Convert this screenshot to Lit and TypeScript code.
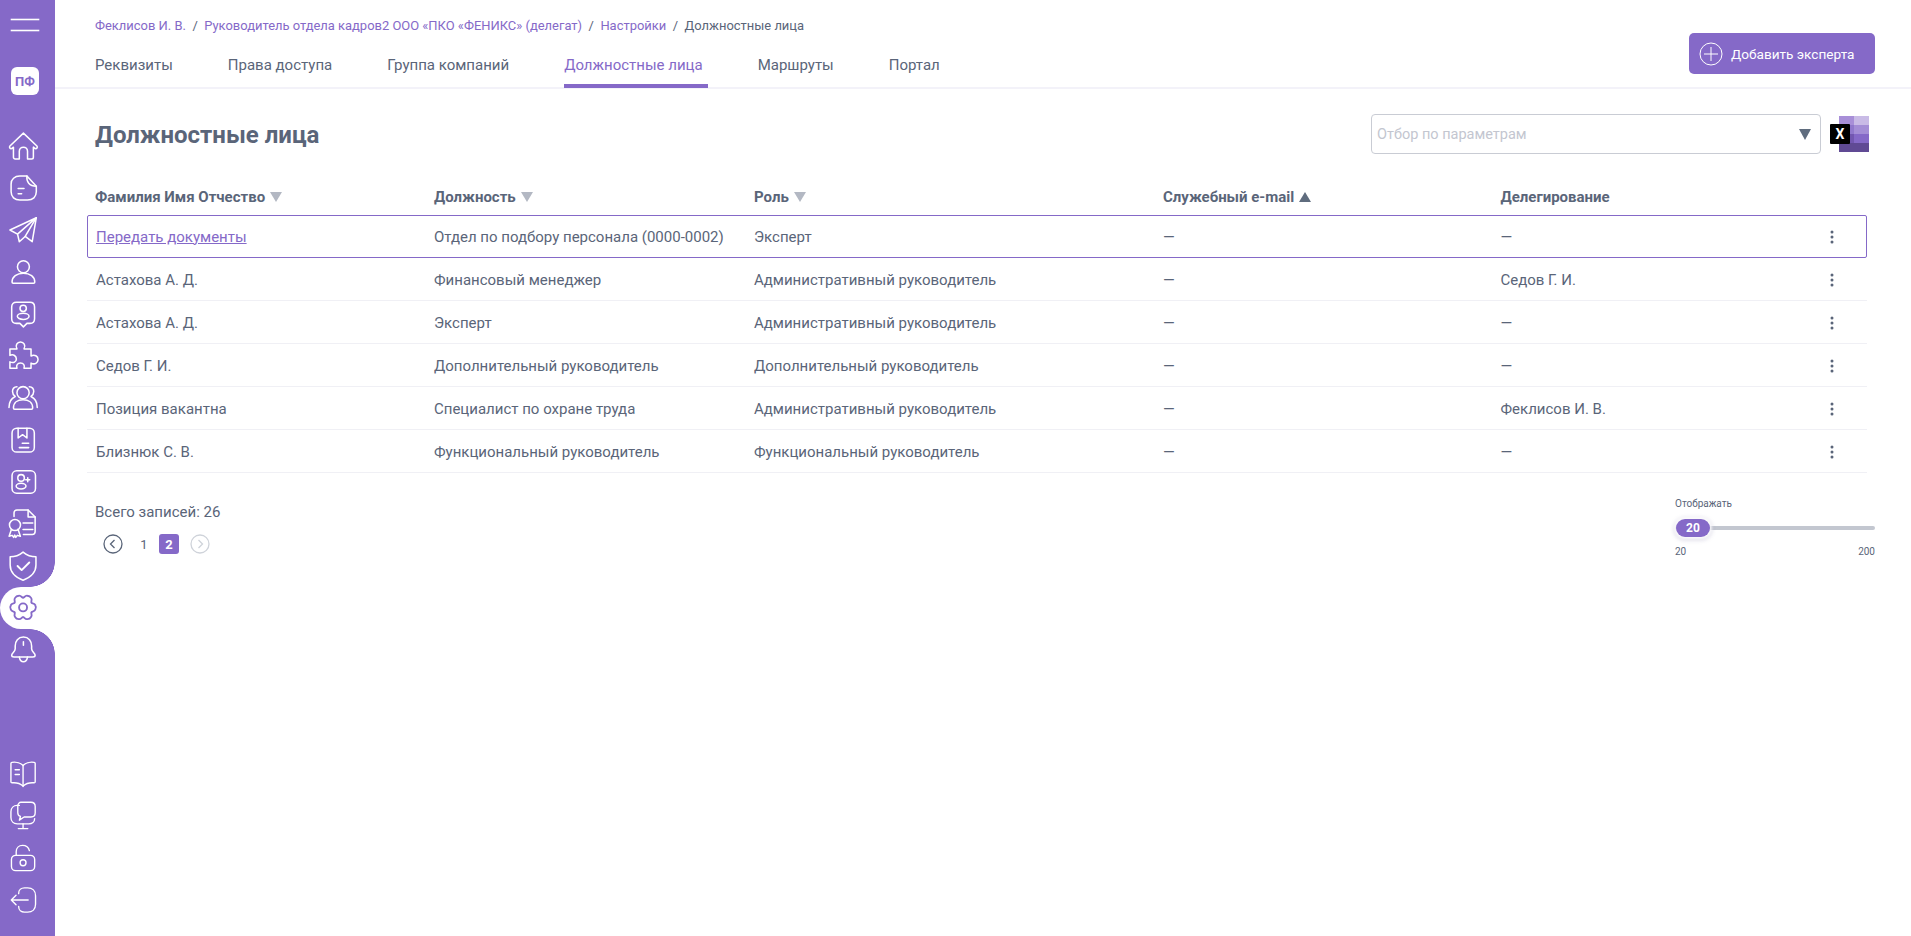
import { LitElement, html, css, svg } from 'lit';
import { customElement } from 'lit/decorators.js';
import { classMap } from 'lit/directives/class-map.js';

// six rounded lobes around the centre of the 29 box
function gearPath() {
  const pt = (deg: number, r: number) => {
    const a = (deg * Math.PI) / 180;
    return `${(13.7 + r * Math.cos(a)).toFixed(2)} ${(14 + r * Math.sin(a)).toFixed(2)}`;
  };
  const outer = 10.6;
  const inner = 8.2;
  let d = `M${pt(-30, inner)}`;
  for (let i = 0; i < 6; i++) {
    const a = i * 60;
    d += `C${pt(a - 24, inner)} ${pt(a - 20, outer)} ${pt(a - 10, outer)}`;
    d += `C${pt(a - 3, outer + 0.6)} ${pt(a + 3, outer + 0.6)} ${pt(a + 10, outer)}`;
    d += `C${pt(a + 20, outer)} ${pt(a + 24, inner)} ${pt(a + 30, inner)}`;
  }
  return d + 'Z';
}

const icons = {
  home: svg`<path d="M2.500 14.500 14 3.500l11.500 11c1 1.200-.3 2.600-1.500 2.200L22.500 15.500V24c0 1-.6 1.500-1.500 1.500h-3.500V19c0-2-1.500-3.500-3.500-3.500s-3.500 1.500-3.500 3.500v6.500H7c-.9 0-1.500-.5-1.500-1.500v-8.500L4 16.700c-1.200.4-2.500-1-1.500-2.200Z"/>`,
  doc: svg`<path d="M17 4.300H11C6.500 4.300 3.500 7 3.500 11v6.800C3.500 22 6.500 24.800 11 24.800h6.500c4.500 0 7.500-2.800 7.500-7V13Z"/><path d="M17 4.300c-.6 4.700 2 8.700 8 8.700"/><path d="M9.500 15h5M9.500 19.500h3"/>`,
  send: svg`<path d="M25 4 2.500 14.500l6.500 3.500L25 4l-3.500 20.500-6-4.500-5 4.500-1.500-6.500"/><path d="M15.500 20 25 4"/>`,
  user: svg`<circle cx="14" cy="10" r="5.100"/><path d="M4.300 23c0-4.500 4-7.500 9.700-7.500s9.700 3 9.700 7.500c0 .7-.4 1-1 1H5.300c-.6 0-1-.3-1-1Z"/>`,
  badge: svg`<path d="M8 4.500h11.500c2.500 0 4 1.500 4 4v10c0 2.500-1.500 4-4 4h-2.500l-3 3-3-3H8c-2.500 0-4-1.500-4-4v-10c0-2.500 1.500-4 4-4Z"/><circle cx="13.800" cy="9.700" r="2.700"/><ellipse cx="13.800" cy="16.500" rx="5" ry="2.600"/>`,
  puzzle: svg`<path d="M2.500 8.500h6c-1.800-3 .2-6 3-6s4.800 3 3 6h6v6c3-1.800 6 .2 6 3s-3 4.800-6 3v4.500h-6c1-3-.7-4.500-3-4.500s-4 1.500-3 4.500h-6v-5.500c3 1.500 5.500-.2 5.500-2.500S5.500 12.500 2.500 14Z"/>`,
  group: svg`<circle cx="13.700" cy="10" r="5.200"/><path d="M5.500 23c0-4.500 3.500-7 8.200-7s8.200 2.500 8.200 7c0 .6-.3 1-1 1H6.500c-.7 0-1-.4-1-1Z"/><path d="M8.500 5C6 5.200 4.700 7 4.700 9c0 1.800.9 3.200 2.300 4.200-3.200 1.500-5.300 5-5.300 9.300M19 5c2.500.2 3.800 2 3.800 4 0 1.800-.9 3.200-2.300 4.200 3.200 1.500 5.300 5 5.300 9.300"/>`,
  book: svg`<rect x="4.300" y="4.500" width="19" height="20.300" rx="4"/><path d="M9.500 4.500v8.300l3.800-2.800 3.700 2.800V4.500"/><path d="M13 17.300h5.500M10.500 21h8"/>`,
  userPlus: svg`<rect x="4.300" y="5" width="20" height="19" rx="4"/><circle cx="12" cy="11" r="2.800"/><ellipse cx="12" cy="18" rx="4.200" ry="2.400"/><path d="M16 12.500h3.400M17.700 10.800v3.400"/>`,
  cert: svg`<path d="M6 8V5c0-1.500 1-2.500 2.500-2.500H18l6 6V21c0 1.500-1 2.500-2.500 2.500H14"/><path d="M18 2.500V8.500h6"/><path d="M13.700 13.700h8.300M13.700 19.200h8.300"/><circle cx="6.800" cy="15.400" r="4.700"/><path d="m3.800 19-2 6 2.600-.8 1.300 1.700.9-1.900.9 1.900 1.300-1.700 2.600.8-2-6"/>`,
  shield: svg`<path transform="translate(-.8 0)" d="M14.500 2.600c3 2.500 7 4 11 4v7c0 6-4.500 10.500-11 13-6.500-2.500-11-7-11-13v-7c4 0 8-1.500 11-4Z"/><path d="m9 14.500 3.500 3.500 6.500-6.500" stroke-width="1.600"/>`,
  gear: svg`<circle cx="13.700" cy="14" r="3.400"/><path d=${gearPath()}/>`,
  bell: svg`<path d="M14 3.500c-4.500 0-7 3.500-7 7.500v2.500c0 2.500-3 3.500-3 5.500 0 1.200.8 1.500 2 1.500h16c1.200 0 2-.3 2-1.500 0-2-3-3-3-5.500V11c0-4-2.500-7.500-7-7.500Z"/><path d="M14 7.500v3"/><path d="M10.500 20.500c.5 2.800 2 4 3.500 4s3-1.200 3.500-4"/>`,
  manual: svg`<g transform="translate(13.700 14) scale(.9) translate(-14 -14)"><path d="M14 6.500C11.500 4 7.500 3 3.500 3.500c-.7.100-1 .5-1 1.100v17.300c0 .7.500 1.100 1.200 1 4-.4 7.500.6 10.300 3 2.800-2.400 6.300-3.400 10.300-3 .7.100 1.200-.3 1.200-1V4.600c0-.6-.3-1-1-1.100-4-.5-8 .5-10.500 3Z"/><path d="M14 6.500v19.900"/><path d="M6.500 10.500h4M6.500 15h4"/></g>`,
  chat: svg`<g transform="translate(13.700 14) scale(.9) translate(-14.500 -15)"><path d="M11 5.500H9C5.500 5.500 3 8 3 11.500v5.500c0 3.500 2.500 6 6 6h11c3 0 5.500-2 5.500-5"/><path d="M13 2.500h9c2.500 0 4 1.500 4 4v6c0 2.500-1.500 4-4 4h-6.500l-4.500 3 1-3.500c-1.500-.5-2.500-2-2.500-3.500V6.500c0-2.500 1.500-4 3-4Z"/><path d="M14.500 23v4M10 27.500h9"/></g>`,
  lock: svg`<g transform="translate(13.700 14.500) scale(.9) translate(-14.500 -14.500)"><rect x="3.500" y="12" width="22" height="14.500" rx="4"/><circle cx="14.500" cy="19" r="2.800"/><path d="M8 12V8.500C8 5 10.500 2.500 14 2.500c3.200 0 5.800 2 6.500 5"/></g>`,
  exit: svg`<g transform="translate(14 14.500) scale(.9) translate(-13.500 -14)"><path d="M9 8V7.500C9 4.500 11.500 2.500 14.500 2.500h3c4.500 0 7.500 3 7.500 7.500v8c0 4.500-3 7.500-7.500 7.500h-3C11.500 25.500 9 23.500 9 20.500V20"/><path d="M18 14H2M6.500 9.500 2 14l4.500 4.500"/></g>`,
};

type IconName = keyof typeof icons;

const mainNav: IconName[] = ['home', 'doc', 'send', 'user', 'badge', 'puzzle', 'group', 'book', 'userPlus', 'cert', 'shield', 'gear', 'bell'];
const bottomNav: IconName[] = ['manual', 'chat', 'lock', 'exit'];

const rows = [
  ['Астахова А. Д.', 'Финансовый менеджер', 'Административный руководитель', '—', 'Седов Г. И.'],
  ['Астахова А. Д.', 'Эксперт', 'Административный руководитель', '—', '—'],
  ['Седов Г. И.', 'Дополнительный руководитель', 'Дополнительный руководитель', '—', '—'],
  ['Позиция вакантна', 'Специалист по охране труда', 'Административный руководитель', '—', 'Феклисов И. В.'],
  ['Близнюк С. В.', 'Функциональный руководитель', 'Функциональный руководитель', '—', '—'],
];

const dots = html`<svg class="dots" width="4" height="14" viewBox="0 0 4 14"><circle cx="2" cy="2" r="1.500"/><circle cx="2" cy="7" r="1.500"/><circle cx="2" cy="12" r="1.500"/></svg>`;

@customElement('app-root')
export class AppRoot extends LitElement {
  static styles = css`
    :host {
      display: flex;
      min-height: 936px;
      height: 100vh;
      font-family: Roboto, 'Noto Sans', sans-serif;
      color: #5a6579;
      background: #fff;
      overflow: hidden;
    }

    .sidebar {
      width: 55px;
      flex-shrink: 0;
      background: #8569c8;
      display: flex;
      flex-direction: column;
      align-items: stretch;
    }

    .burger {
      height: 36px;
      margin-top: 19px;
      padding-left: 11px;
      display: flex;
      flex-direction: column;
      gap: 10px;
    }

    .burger span {
      display: block;
      width: 28px;
      height: 1px;
      background: #fff;
      box-shadow: 0 0 0 0.3px #fff;
    }

    .logo {
      width: 28px;
      height: 28px;
      margin: 12px 0 0 11px;
      background: #fff;
      border-radius: 6px;
      color: #8569c8;
      font-size: 13px;
      font-weight: 700;
      display: flex;
      align-items: center;
      justify-content: center;
    }

    .nav {
      list-style: none;
      margin: 0;
      padding: 0;
    }

    .nav.main {
      margin-top: 30px;
    }

    .nav.bottom {
      margin-top: auto;
      margin-bottom: 15px;
    }

    .nav li {
      height: 42px;
      display: flex;
      align-items: center;
      padding-left: 7px;
      position: relative;
    }

    .nav svg {
      width: 34px;
      height: 34px;
      fill: none;
      stroke: #fff;
      stroke-width: 1.300;
      stroke-linecap: round;
      stroke-linejoin: round;
    }

    .nav li.active {
      background: #fff;
      border-radius: 21px 0 0 21px;
    }

    .nav li.active svg {
      stroke: #8569c8;
      stroke-width: 1.600;
    }

    .nav li.active::before,
    .nav li.active::after {
      content: '';
      position: absolute;
      right: 0;
      width: 25px;
      height: 25px;
    }

    .nav li.active::before {
      top: -25px;
      background: radial-gradient(circle at 0 0, transparent 24.500px, #fff 25px);
    }

    .nav li.active::after {
      bottom: -25px;
      background: radial-gradient(circle at 0 100%, transparent 24.500px, #fff 25px);
    }

    .content {
      flex: 1;
      min-width: 0;
      display: flex;
      flex-direction: column;
    }

    .topbar {
      height: 87px;
      border-bottom: 2px solid #f3f2f9;
      padding-left: 40px;
      padding-right: 36px;
      display: flex;
      justify-content: space-between;
    }

    .crumbs {
      margin-top: 19px;
      font-size: 12.950px;
      line-height: 14px;
      color: #8569c8;
      display: flex;
      gap: 6.500px;
    }

    .crumbs .current {
      color: #5a6579;
    }

    .tabs {
      display: flex;
      gap: 50px;
      margin-top: 16px;
    }

    .tab {
      height: 39px;
      padding-right: 5px;
      font-size: 15px;
      line-height: 18px;
      box-sizing: border-box;
      padding-top: 7px;
      border-bottom: 4px solid transparent;
      white-space: nowrap;
    }

    .tab.active {
      color: #8569c8;
      border-bottom-color: #8569c8;
    }

    .add {
      width: 186px;
      height: 41px;
      margin-top: 33px;
      border: none;
      border-radius: 5px;
      background: #8569c8;
      color: #fff;
      font: inherit;
      font-size: 13.600px;
      display: flex;
      align-items: center;
      gap: 8px;
      padding: 0 0 0 10px;
    }

    .add svg {
      width: 24px;
      height: 24px;
      fill: none;
      stroke: #fff;
      stroke-width: 1;
    }

    .body {
      padding: 0 36px 0 40px;
    }

    .title-row {
      height: 93px;
      display: flex;
      align-items: center;
      justify-content: space-between;
    }

    h1 {
      margin: 0 0 2px;
      font-size: 24px;
      font-weight: 700;
      color: #5a6579;
    }

    .filter-area {
      display: flex;
      align-items: center;
      gap: 9px;
      align-self: flex-start;
      margin-top: 25px;
    }

    .filter {
      width: 450px;
      height: 40px;
      box-sizing: border-box;
      border: 1px solid #c9ccd4;
      border-radius: 4px;
      padding: 0 9px 0 5px;
      display: flex;
      align-items: center;
      justify-content: space-between;
      font-size: 14.500px;
      color: #c3c6d0;
    }

    .caret {
      width: 0;
      height: 0;
      border-left: 6px solid transparent;
      border-right: 6px solid transparent;
      border-top: 11px solid #5f6c7e;
    }

    .xls {
      display: block;
      margin-right: 6px;
    }

    .table {
      margin-left: -8px;
      margin-right: 8px;
    }

    .row {
      display: grid;
      grid-template-columns: 338px 320px 409px 337.500px 1fr 40px;
      align-items: center;
      height: 43px;
      font-size: 15px;
      border-bottom: 1px solid #f0f0f5;
      box-sizing: border-box;
      padding: 1px 1px 0 9px;
    }

    .row.head {
      height: 33px;
      padding: 0 0 3px 9px;
      border-bottom: none;
      font-weight: 700;
      font-size: 15px;
    }

    .row.head span:first-child {
      margin-left: -1px;
    }

    .row.selected {
      border: 1px solid #8569c8;
      border-radius: 2px;
      padding: 0 0 0 8px;
    }

    .row a {
      color: #8569c8;
      text-decoration: underline;
    }

    .sort {
      display: inline-block;
      margin-left: 5px;
      width: 0;
      height: 0;
      border-left: 6px solid transparent;
      border-right: 6px solid transparent;
      border-top: 10px solid #b3b8c3;
    }

    .sort.up {
      border-top: none;
      border-bottom: 10px solid #5f6c7e;
    }

    .dots {
      fill: #5a6579;
      display: block;
      margin-left: 4px;
    }

    .footer {
      display: flex;
      justify-content: space-between;
      align-items: flex-start;
      margin-top: 30px;
    }

    .total {
      font-size: 15px;
      line-height: 18px;
    }

    .pager {
      display: flex;
      align-items: center;
      margin: 13px 0 0 8px;
      font-size: 13px;
      gap: 11px;
    }

    .pager svg {
      display: block;
      width: 20px;
      height: 20px;
      fill: none;
      stroke: #5a6579;
      stroke-width: 1.300;
    }

    .pager svg.off {
      stroke: #cfd3da;
    }

    .page {
      width: 20px;
      height: 20px;
      border-radius: 3px;
      display: flex;
      align-items: center;
      justify-content: center;
      margin-right: -6px;
    }

    .page.on {
      background: #8569c8;
      color: #fff;
      font-weight: 700;
      margin-right: 0;
    }

    .slider {
      width: 200px;
      font-size: 10px;
      margin-top: -5px;
    }

    .slider-label {
      line-height: 12px;
    }

    .track {
      height: 4px;
      background: #c3c7d0;
      border-radius: 2px;
      margin-top: 16px;
      display: flex;
      align-items: center;
    }

    .thumb {
      width: 34px;
      height: 18px;
      margin-left: 1px;
      border-radius: 9px;
      background: #8569c8;
      color: #fff;
      font-size: 12px;
      font-weight: 700;
      display: flex;
      align-items: center;
      justify-content: center;
      box-shadow: 0 0 3px 2px rgba(255, 255, 255, 0.900), 0 1px 4px 2px rgba(120, 110, 160, 0.300);
    }

    .range {
      display: flex;
      justify-content: space-between;
      margin-top: 16px;
      line-height: 12px;
    }
  `;

  private renderNav(items: IconName[], cls: string) {
    return html`<ul class="nav ${cls}">
      ${items.map(
        (name) => html`<li class=${classMap({ active: name === 'gear' })}>
          <svg viewBox="0 0 29 29">${icons[name]}</svg>
        </li>`
      )}
    </ul>`;
  }

  render() {
    return html`
      <aside class="sidebar">
        <div class="burger"><span></span><span></span></div>
        <div class="logo">ПФ</div>
        ${this.renderNav(mainNav, 'main')}
        ${this.renderNav(bottomNav, 'bottom')}
      </aside>
      <main class="content">
        <header class="topbar">
          <div>
            <div class="crumbs">
              <span>Феклисов И. В.</span>
              <span class="current">/</span>
              <span>Руководитель отдела кадров2 ООО «ПКО «ФЕНИКС» (делегат)</span>
              <span class="current">/</span>
              <span>Настройки</span>
              <span class="current">/</span>
              <span class="current">Должностные лица</span>
            </div>
            <nav class="tabs">
              ${['Реквизиты', 'Права доступа', 'Группа компаний', 'Должностные лица', 'Маршруты', 'Портал'].map(
                (t) => html`<div class="tab ${t === 'Должностные лица' ? 'active' : ''}">${t}</div>`
              )}
            </nav>
          </div>
          <button class="add">
            <svg viewBox="0 0 24 24"><circle cx="12" cy="12" r="11"/><path d="M12 5v14M5 12h14"/></svg>
            Добавить эксперта
          </button>
        </header>
        <section class="body">
          <div class="title-row">
            <h1>Должностные лица</h1>
            <div class="filter-area">
              <div class="filter">Отбор по параметрам <span class="caret"></span></div>
              <svg class="xls" width="39" height="36" viewBox="0 0 39 36">
                <rect x="9" y="0" width="15" height="9" fill="#a88fd8"/>
                <rect x="24" y="0" width="15" height="9" fill="#c9bbe6"/>
                <rect x="9" y="9" width="15" height="9" fill="#9078cc"/>
                <rect x="24" y="9" width="15" height="9" fill="#a48ed6"/>
                <rect x="9" y="18" width="15" height="9" fill="#7257b0"/>
                <rect x="24" y="18" width="15" height="9" fill="#8569c8"/>
                <rect x="9" y="27" width="30" height="9" fill="#604a94"/>
                <rect x="0" y="8" width="20" height="20" rx="1" fill="#000"/>
                <text x="10" y="23" text-anchor="middle" fill="#fff" font-family="Roboto" font-size="14" font-weight="700">X</text>
              </svg>
            </div>
          </div>
          <div class="table">
            <div class="row head">
              <span>Фамилия Имя Отчество<i class="sort"></i></span>
              <span>Должность<i class="sort"></i></span>
              <span>Роль<i class="sort"></i></span>
              <span>Служебный e-mail<i class="sort up"></i></span>
              <span>Делегирование</span>
              <span></span>
            </div>
            <div class="row selected">
              <span><a>Передать документы</a></span>
              <span>Отдел по подбору персонала (0000-0002)</span>
              <span>Эксперт</span>
              <span>—</span>
              <span>—</span>
              ${dots}
            </div>
            ${rows.map(
              (r) => html`<div class="row">
                ${r.map((c) => html`<span>${c}</span>`)} ${dots}
              </div>`
            )}
          </div>
          <div class="footer">
            <div>
              <div class="total">Всего записей: 26</div>
              <div class="pager">
                <svg viewBox="0 0 20 20"><circle cx="10" cy="10" r="9"/><path d="m11.500 6-4 4 4 4"/></svg>
                <span class="page">1</span>
                <span class="page on">2</span>
                <svg class="off" viewBox="0 0 20 20"><circle cx="10" cy="10" r="9"/><path d="m8.500 6 4 4-4 4"/></svg>
              </div>
            </div>
            <div class="slider">
              <div class="slider-label">Отображать</div>
              <div class="track"><div class="thumb">20</div></div>
              <div class="range"><span>20</span><span>200</span></div>
            </div>
          </div>
        </section>
      </main>
    `;
  }
}
